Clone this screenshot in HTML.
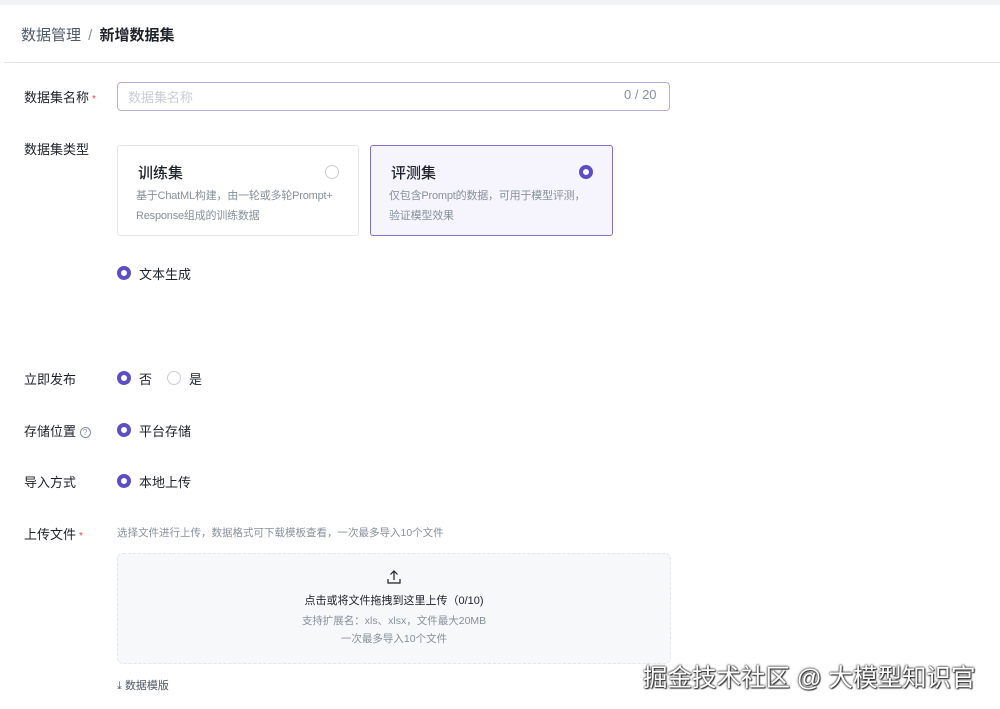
<!DOCTYPE html>
<html><head><meta charset="utf-8"><style>
*{margin:0;padding:0;box-sizing:border-box}
body{width:1000px;height:709px;background:#fff;font-family:"Liberation Sans","Noto Sans CJK SC",sans-serif;color:#1d2129;position:relative;overflow:hidden}
.a{position:absolute}
.top{left:0;top:0;width:1000px;height:5px;background:#f2f3f5}
.hdr{left:4px;top:5px;width:996px;height:58px;border-bottom:1px solid #e5e6eb}
.lbl{font-size:13px;color:#1d2129}
.star{color:#f53f3f;font-size:10px;margin-left:3px}
.radio{width:14px;height:14px;border-radius:50%;border:1px solid #c9cdd4;background:#fff}
.radio.on{border:4px solid #5b4ec7}
.card{border:1px solid #e5e6eb;border-radius:3px;background:#fff}
.card h3{font-size:15px;font-weight:500;position:absolute;left:20px;top:16px}
.card p{font-size:11px;color:#86909c;line-height:20px;position:absolute;left:18px;top:40px;width:240px;white-space:nowrap;letter-spacing:-0.2px}
.t{font-size:13px}
.wm{font-size:24.5px;color:#fff;text-shadow:0 0 2px #333,0 0 2px #333,1px 1px 1px #333}
</style></head><body>
<div class="a top"></div>
<div class="a hdr"></div>
<div class="a" style="left:21px;top:24px;font-size:15px;color:#4e5969">数据管理 <span style="color:#86909c;margin:0 3px">/</span> <b style="color:#1d2129;font-weight:600">新增数据集</b></div>

<div class="a lbl" style="left:24px;top:87px">数据集名称<span class="star">*</span></div>
<div class="a" style="left:117px;top:82px;width:553px;height:29px;border:1px solid #b5add9;border-radius:4px"></div>
<div class="a" style="left:128px;top:87px;font-size:13px;color:#c9cdd4">数据集名称</div>
<div class="a" style="left:624px;top:87px;font-size:13px;color:#86909c">0 / 20</div>

<div class="a lbl" style="left:24px;top:139px">数据集类型</div>
<div class="a card" style="left:117px;top:145px;width:242px;height:91px"><h3>训练集</h3><p>基于ChatML构建，由一轮或多轮Prompt+<br>Response组成的训练数据</p><div class="a radio" style="left:207px;top:19px"></div></div>
<div class="a card" style="left:370px;top:145px;width:243px;height:91px;background:#f6f5fd;border-color:#7d72d0"><h3>评测集</h3><p>仅包含Prompt的数据，可用于模型评测，<br>验证模型效果</p><div class="a radio on" style="left:208px;top:19px"></div></div>

<div class="a radio on" style="left:117px;top:266px"></div>
<div class="a t" style="left:139px;top:264px">文本生成</div>

<div class="a lbl" style="left:24px;top:369px">立即发布</div>
<div class="a radio on" style="left:117px;top:371px"></div><div class="a t" style="left:139px;top:369px">否</div>
<div class="a radio" style="left:167px;top:371px"></div><div class="a t" style="left:189px;top:369px">是</div>

<div class="a lbl" style="left:24px;top:421px">存储位置 <span style="display:inline-block;width:11px;height:11px;border:1px solid #86909c;border-radius:50%;font-size:8px;line-height:9px;text-align:center;color:#86909c;vertical-align:1px">?</span></div>
<div class="a radio on" style="left:117px;top:423px"></div><div class="a t" style="left:139px;top:421px">平台存储</div>

<div class="a lbl" style="left:24px;top:472px">导入方式</div>
<div class="a radio on" style="left:117px;top:474px"></div><div class="a t" style="left:139px;top:472px">本地上传</div>

<div class="a lbl" style="left:24px;top:524px">上传文件<span class="star">*</span></div>
<div class="a" style="left:117px;top:525px;font-size:10.5px;color:#86909c">选择文件进行上传，数据格式可下载模板查看，一次最多导入10个文件</div>
<div class="a" style="left:117px;top:553px;width:554px;height:111px;border:1px dashed #e5e6eb;border-radius:6px;background:#f7f8fa"></div>
<svg class="a" style="left:387px;top:570px" width="14" height="14" viewBox="0 0 14 14" fill="none" stroke="#1d2129" stroke-width="1.2"><path d="M7 10V1M3.5 4.5L7 1l3.5 3.5M1 9v4h12V9"/></svg>
<div class="a" style="left:117px;top:592px;width:554px;text-align:center;font-size:11px;color:#1d2129">点击或将文件拖拽到这里上传（0/10)</div>
<div class="a" style="left:117px;top:613px;width:554px;text-align:center;font-size:10.5px;color:#86909c">支持扩展名：xls、xlsx，文件最大20MB</div>
<div class="a" style="left:117px;top:631px;width:554px;text-align:center;font-size:10.5px;color:#86909c">一次最多导入10个文件</div>
<div class="a" style="left:117px;top:677px;font-size:11px;color:#4e5969">⤓ 数据模版</div>
<div class="a wm" style="left:643px;top:659px">掘金技术社区 @ 大模型知识官</div>
</body></html>
